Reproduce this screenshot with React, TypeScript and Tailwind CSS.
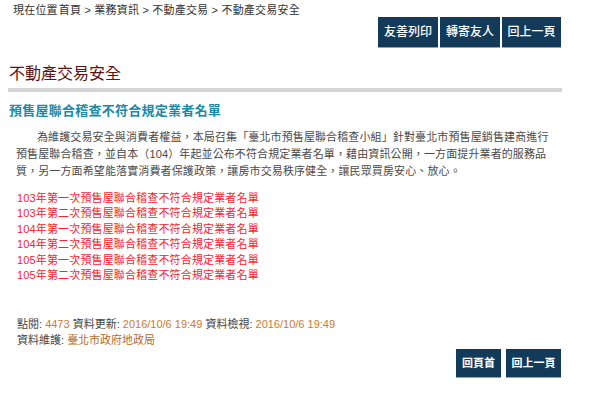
const font = "font-['Liberation_Sans','Noto_Sans_CJK_TC',sans-serif]";

const lists = [
  "103年第一次預售屋聯合稽查不符合規定業者名單",
  "103年第二次預售屋聯合稽查不符合規定業者名單",
  "104年第一次預售屋聯合稽查不符合規定業者名單",
  "104年第二次預售屋聯合稽查不符合規定業者名單",
  "105年第一次預售屋聯合稽查不符合規定業者名單",
  "105年第二次預售屋聯合稽查不符合規定業者名單",
];

function NavButton({ label, w, size }: { label: string; w: string; size: "lg" | "sm" }) {
  return (
    <button
      className={
        size === "lg"
          ? `${w} h-[31px] bg-[#143a59] text-[12px] leading-none text-white font-medium border-b border-[#90a3b5]`
          : `${w} h-[29px] bg-[#143a59] text-[11px] leading-none text-white font-bold border-b border-[#90a3b5]`
      }
    >
      {label}
    </button>
  );
}

export default function App() {
  return (
    <div className={`w-[600px] h-[396px] bg-white overflow-hidden ${font}`}>
      {/* Breadcrumb */}
      <div className="pl-[13px] pt-[3px] h-[17px] text-[11px] leading-[14px] tracking-[0.2px] text-[#333] whitespace-nowrap">
        現在位置<span className="ml-[1px]">首頁</span> &gt; 業務資訊 &gt; 不動產交易 &gt; 不動產交易安全
      </div>

      {/* Top actions */}
      <div className="flex justify-end gap-[2px] pr-[39px]">
        <NavButton label="友善列印" w="w-[60px]" size="lg" />
        <NavButton label="轉寄友人" w="w-[60px]" size="lg" />
        <NavButton label="回上一頁" w="w-[59px]" size="lg" />
      </div>

      <div className="ml-[8px] w-[554px]">
        <h1 className="mt-[15px] pl-[1px] text-[16px] leading-[22px] text-[#5a1212]">不動產交易安全</h1>
        <div className="mt-[3px] h-[4px] bg-[#d4d4d4]" />

        <h2 className="mt-[10px] pl-[1px] text-[13px] leading-[18px] font-bold tracking-[0.25px] text-[#1a8aa6]">
          預售屋聯合稽查不符合規定業者名單
        </h2>

        <p className="mt-[9px] pl-[8px] text-[11px] leading-[17px] tracking-[0.12px] text-[#4a4a4a] whitespace-nowrap">
          <span className="pl-[21px]">
            為維護交易安全與消費者權益，本局召集「臺北市預售屋聯合稽查小組」針對臺北市預售屋銷售建商進行
          </span>
          <br />
          預售屋聯合稽查，並自本（104）年起並公布不符合規定業者名單，藉由資訊公開，一方面提升業者的服務品
          <br />
          質，另一方面希望能落實消費者保護政策，讓房市交易秩序健全，讓民眾買房安心、放心。
        </p>

        <ul className="mt-[11px] pl-[9px] text-[11px] leading-[15.4px] tracking-[0.15px] text-[#f2262e]">
          {lists.map((t) => (
            <li key={t}>{t}</li>
          ))}
        </ul>

        <div className="mt-[33px] pl-[9px] text-[11px] leading-[16px] text-[#444]">
          <div>
            點閱: <span className="text-[#cc7a2e]">4473</span> 資料更新:{" "}
            <span className="text-[#cc7a2e]">2016/10/6 19:49</span> 資料檢視:{" "}
            <span className="text-[#cc7a2e]">2016/10/6 19:49</span>
          </div>
          <div>
            資料維護: <span className="text-[#b8692a]">臺北市政府地政局</span>
          </div>
        </div>

        <div className="mt-[1px] flex justify-end gap-[5px] pr-[1px]">
          <NavButton label="回頁首" w="w-[45px]" size="sm" />
          <NavButton label="回上一頁" w="w-[55px]" size="sm" />
        </div>
      </div>
    </div>
  );
}
